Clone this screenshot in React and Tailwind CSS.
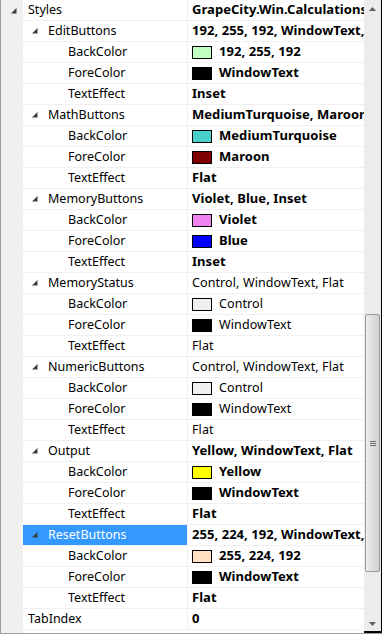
import React from 'react';

const groups = [
  { name: 'EditButtons', summary: '192, 255, 192, WindowText, Inset', bold: true, back: ['#c0ffc0', '192, 255, 192'], fore: ['#000000', 'WindowText'], effect: 'Inset' },
  { name: 'MathButtons', summary: 'MediumTurquoise, Maroon, Flat', bold: true, back: ['#48d1cc', 'MediumTurquoise'], fore: ['#800000', 'Maroon'], effect: 'Flat' },
  { name: 'MemoryButtons', summary: 'Violet, Blue, Inset', bold: true, back: ['#ee82ee', 'Violet'], fore: ['#0000ff', 'Blue'], effect: 'Inset' },
  { name: 'MemoryStatus', summary: 'Control, WindowText, Flat', bold: false, back: ['#f0f0f0', 'Control'], fore: ['#000000', 'WindowText'], effect: 'Flat' },
  { name: 'NumericButtons', summary: 'Control, WindowText, Flat', bold: false, back: ['#f0f0f0', 'Control'], fore: ['#000000', 'WindowText'], effect: 'Flat' },
  { name: 'Output', summary: 'Yellow, WindowText, Flat', bold: true, back: ['#ffff00', 'Yellow'], fore: ['#000000', 'WindowText'], effect: 'Flat' },
  { name: 'ResetButtons', summary: '255, 224, 192, WindowText, Flat', bold: true, back: ['#ffe0c0', '255, 224, 192'], fore: ['#000000', 'WindowText'], effect: 'Flat', selected: true },
];

const Arrow = () => (
  <svg width="6" height="6" viewBox="0 0 6 6" className="shrink-0">
    <polygon points="0,5.5 5.5,5.5 5.5,0" fill="#3c3c3c" />
  </svg>
);

const Row = ({ gutter, indent, name, value, bold, swatch, selected }) => (
  <div className="flex h-[21px]">
    <div className="w-[22px] shrink-0 bg-[#f0f0f0] flex items-center pl-[10px]">{gutter}</div>
    <div
      className={`w-[165px] shrink-0 flex items-center border-b border-r border-[#f0f0f0] ${indent} ${selected ? 'bg-[#3399ff] text-white' : ''}`}
    >
      {name}
    </div>
    <div
      className={`flex-1 min-w-0 flex items-center pl-[4px] border-b border-[#f0f0f0] overflow-hidden whitespace-nowrap ${bold ? 'font-bold text-[13px] tracking-[0.05px]' : 'tracking-[0.1px]'}`}
    >
      {swatch && <span className="w-[20px] h-[13px] shrink-0 border border-black mr-[7px] mt-[1px]" style={{ backgroundColor: swatch }} />}
      <span>{value}</span>
    </div>
  </div>
);

const Scrollbar = () => (
  <div className="w-[18px] shrink-0 flex flex-col bg-[#ececec] border-r border-black">
    <div className="h-[17px] flex items-center justify-center">
      <svg width="7" height="4" viewBox="0 0 7 4"><polygon points="0,4 7,4 3.5,0" fill="#606060" /></svg>
    </div>
    <div className="h-[297px]" />
    <div className="h-[258px] mx-[1px] border border-[#9a9a9a] rounded-[2px] bg-gradient-to-r from-[#efefef] via-[#dedede] to-[#d0d0d0] flex items-center justify-center">
      <div className="flex flex-col gap-[1px]">
        <div className="w-[6px] h-[1px] bg-[#707070]" />
        <div className="w-[6px] h-[1px] bg-[#707070]" />
        <div className="w-[6px] h-[1px] bg-[#707070]" />
      </div>
    </div>
    <div className="flex-1" />
    <div className="h-[17px] flex items-center justify-center border-b-2 border-black">
      <svg width="7" height="4" viewBox="0 0 7 4"><polygon points="0,0 7,0 3.5,4" fill="#606060" /></svg>
    </div>
  </div>
);

export default function App() {
  return (
    <div
      className="w-[382px] h-[634px] flex bg-white text-black text-[12.5px] border-l border-b border-[#a0a0a0] overflow-hidden"
      style={{ fontFamily: '"Noto Sans", "Liberation Sans", sans-serif' }}
    >
      <div className="flex-1 min-w-0 flex flex-col">
        <Row gutter={<Arrow />} indent="pl-[5px]" name="Styles" value="GrapeCity.Win.Calculations" bold />
        {groups.map((g) => (
          <React.Fragment key={g.name}>
            <Row
              indent="pl-[9px] gap-[10px]"
              name={<><Arrow />{g.name}</>}
              value={g.summary}
              bold={g.bold}
              selected={g.selected}
            />
            <Row indent="pl-[45px]" name="BackColor" value={g.back[1]} bold={g.bold} swatch={g.back[0]} />
            <Row indent="pl-[45px]" name="ForeColor" value={g.fore[1]} bold={g.bold} swatch={g.fore[0]} />
            <Row indent="pl-[45px]" name="TextEffect" value={g.effect} bold={g.bold} />
          </React.Fragment>
        ))}
        <Row indent="pl-[5px]" name="TabIndex" value="0" bold />
        <div className="flex-1 flex">
          <div className="w-[22px] bg-[#f0f0f0]" />
        </div>
      </div>
      <Scrollbar />
    </div>
  );
}
